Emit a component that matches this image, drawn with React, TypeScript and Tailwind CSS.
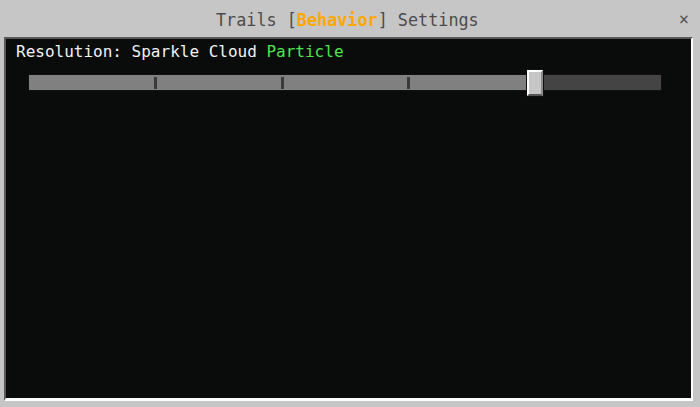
const STEPS = 5;
const VALUE = 0.79; // slider position, 0..1

function Slider() {
  return (
    <div className="relative ml-[22px] mt-[12px] h-[17px] w-[634px] border border-[#111] bg-[#444]">
      <div className="absolute inset-y-0 left-0 bg-[#808080]" style={{ width: `${VALUE * 100}%` }} />
      {/* step ticks */}
      <div className="relative grid h-full grid-cols-5">
        {Array.from({ length: STEPS }).map((_, i) => (
          <div key={i} className="flex items-center justify-end">
            {i < STEPS - 1 && <div className="mr-[-2px] h-[12px] w-[3px] bg-[#3a3a3a]" />}
          </div>
        ))}
      </div>
      <div
        className="absolute top-[-6px] h-[28px] w-[18px] border border-[#111] bg-[#c6c6c6]"
        style={{ left: `calc(${VALUE * 100}% - 2px)` }}
      >
        <div className="h-full w-full border-2 border-l-white border-t-white border-r-[#8b8b8b] border-b-[#555]" />
      </div>
    </div>
  );
}

export default function App() {
  return (
    <div
      className="flex h-[407px] w-[700px] flex-col bg-[#c6c6c6]"
      style={{ fontFamily: '"DejaVu Sans Mono", "Liberation Mono", monospace' }}
    >
      {/* Title bar */}
      <div className="flex h-[37px] items-center pl-[216px] pr-[11px] pt-[4px]">
        <span className="flex-1 text-[16.8px] text-[#4c4c4c]">
          Trails [<span className="font-bold text-[#ffa800]">Behavior</span>] Settings
        </span>
        <span className="mb-[3px] text-[17px] leading-none text-[#555]">×</span>
      </div>

      {/* Panel */}
      <div className="ml-[4px] h-[364px] w-[689px] border-b-[3px] border-l-2 border-r-2 border-t-2 border-b-white border-l-[#5a5a5a] border-r-white border-t-[#5a5a5a]">
        <div className="h-full w-full bg-[#0a0b0b] pt-[3px]">
          <div className="pl-[10px] text-[16px] leading-[20px] text-[#f2f2f2]">
            Resolution: Sparkle Cloud <span className="text-[#4ee44e]">Particle</span>
          </div>
          <Slider />
        </div>
      </div>
    </div>
  );
}
